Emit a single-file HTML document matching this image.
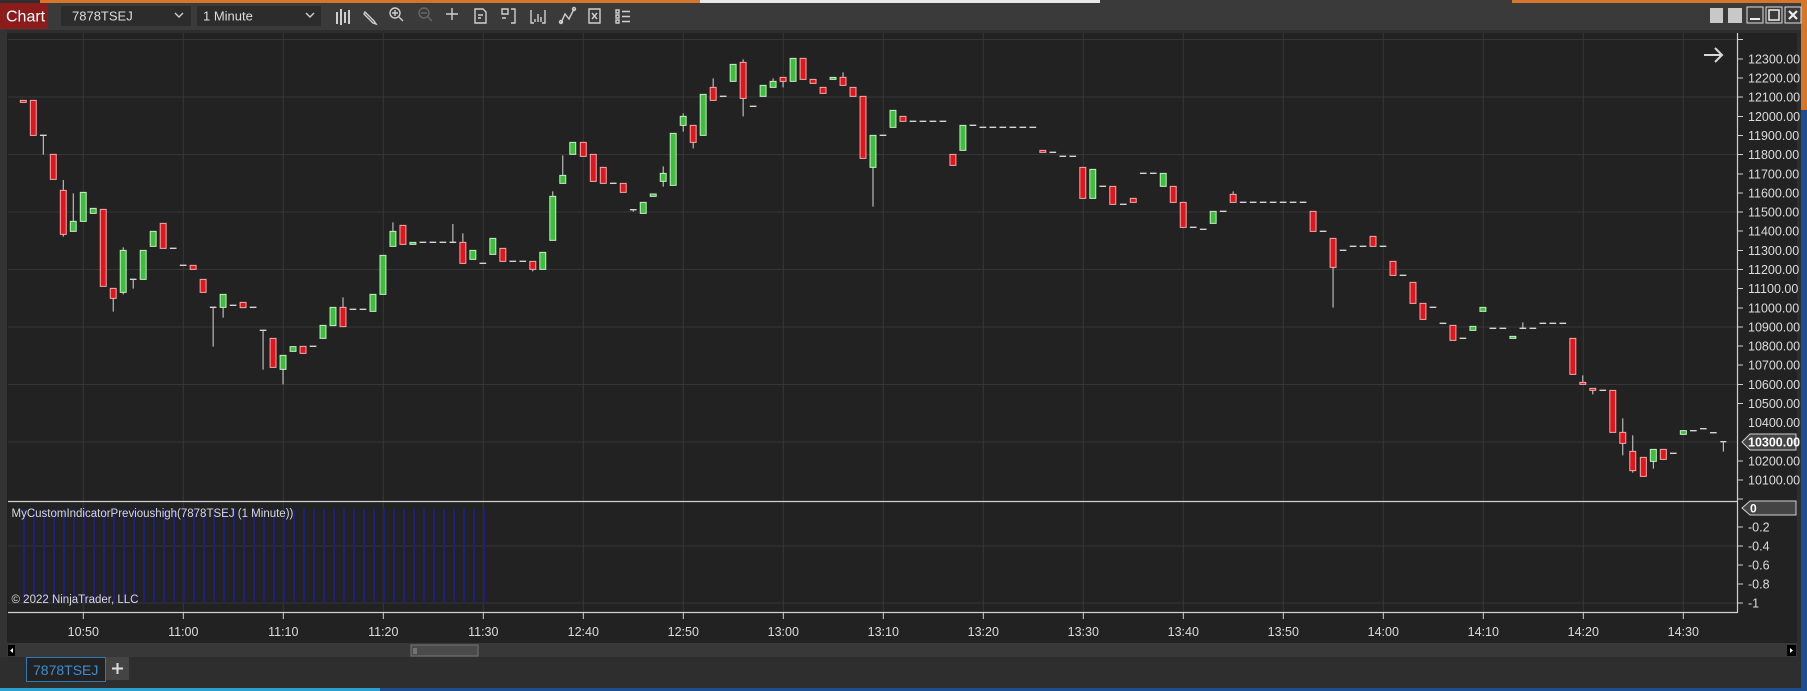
<!DOCTYPE html>
<html><head><meta charset="utf-8"><style>
html,body{margin:0;padding:0;background:#2b2b2b;width:1807px;height:691px;overflow:hidden}
svg{display:block}
text{font-family:"Liberation Sans",sans-serif}
.r{fill:#e3151c;stroke:#f2aaaa;stroke-width:1;vector-effect:non-scaling-stroke}
.g{fill:#3dbf3d;stroke:#c4efc4;stroke-width:1;vector-effect:non-scaling-stroke}
.w{stroke:#d6d6d6;stroke-width:1;vector-effect:non-scaling-stroke}
.d{stroke:#d6d6d6;stroke-width:1.3;vector-effect:non-scaling-stroke}
.ic{fill:none;stroke:#cfcfcf;stroke-width:1.4}
.ax{fill:#dcdcdc;font-size:12.5px}
</style></head><body>
<svg width="1807" height="691" viewBox="0 0 1807 691" xmlns="http://www.w3.org/2000/svg">
<defs>
<pattern id="bl" x="23" y="0" width="10" height="10" patternUnits="userSpaceOnUse"><rect x="0" y="0" width="2" height="10" fill="#1e1e80"/></pattern>
</defs>
<!-- frame -->
<rect x="0" y="0" width="1807" height="691" fill="#2d2d2d"/>
<rect x="40" y="0" width="660" height="3" fill="#d4772a"/>
<rect x="700" y="0" width="400" height="3" fill="#e8e8e8"/>
<rect x="1100" y="0" width="412" height="3" fill="#3a3a3a"/>
<rect x="1512" y="0" width="295" height="3" fill="#d4772a"/>
<rect x="1801" y="0" width="6" height="110" fill="#d4772a"/>
<rect x="1801" y="110" width="6" height="581" fill="#1d4f90"/>
<!-- toolbar -->
<rect x="0" y="3" width="1801" height="27" fill="#3a3a3a"/>
<rect x="0" y="3" width="48" height="26" fill="#8c1c1c"/>
<text x="6" y="21.5" fill="#fff" font-size="16">Chart</text>
<rect x="61" y="6" width="130" height="20" fill="#2c2c2c"/>
<text x="72" y="20.5" fill="#dcdcdc" font-size="13">7878TSEJ</text>
<path d="M175 13 l4 4 l4 -4" class="ic" stroke-width="1.8"/>
<rect x="197" y="6" width="124" height="20" fill="#2c2c2c"/>
<text x="203" y="20.5" fill="#dcdcdc" font-size="13">1 Minute</text>
<path d="M306 13 l4 4 l4 -4" class="ic" stroke-width="1.8"/>
<!-- icons -->
<g class="ic">
<path d="M337 12v12M341 9v16M345 12v11M349 10v14" stroke-width="2"/>
<path d="M365 12l9 9 2 3-3-1-9-9z"/>
<circle cx="395" cy="13" r="5"/><path d="M399 17l4 4M392 13h6M395 10v6"/>
<circle cx="424" cy="13" r="5" stroke="#666"/><path d="M428 17l4 4M421 13h6" stroke="#666"/>
<path d="M446 14h12M452 8v12"/>
<path d="M475 9h8l3 3v11h-11z M478 15h5M478 18h3"/>
<path d="M502 9h6v5h-6zM511 9h4v14h-4M502 18h4"/>
<path d="M531 10v13h3M545 10v13h-3M535 19v3M538 14v8M541 17v5"/>
<path d="M561 23l4-9 4 5 5-10"/><circle cx="561" cy="22" r="1.5"/><circle cx="574" cy="9" r="1.5"/>
<path d="M589 9h11v14h-11zM592 13l5 6M597 13l-5 6"/>
<path d="M616 10h3v3h-3zM616 15h3v3h-3zM616 20h3v3h-3zM622 11.5h8M622 16.5h8M622 21.5h8"/>
</g>
<!-- window buttons -->
<rect x="1710" y="8" width="13" height="15" fill="#c8c8c8"/>
<rect x="1728" y="8" width="14" height="15" fill="#c8c8c8"/>
<rect x="1747" y="7" width="16" height="16" fill="none" stroke="#ddd"/><path d="M1750 19h10" stroke="#eee" stroke-width="2"/>
<rect x="1766" y="7" width="16" height="16" fill="none" stroke="#ddd"/><rect x="1769" y="10" width="10" height="10" fill="none" stroke="#eee" stroke-width="1.5"/>
<rect x="1785" y="7" width="16" height="16" fill="none" stroke="#ddd"/><path d="M1789 11l8 8M1797 11l-8 8" stroke="#eee" stroke-width="2.2"/>
<!-- chart panel -->
<rect x="7" y="33" width="1790" height="624" fill="#222222"/>
<rect x="0" y="30" width="7" height="660" fill="#333"/>
<!-- grid -->
<g stroke="#363636" stroke-width="1">
<path d="M8 39.5H1737M8 97H1737M8 154.5H1737M8 212H1737M8 269.5H1737M8 327H1737M8 384.5H1737M8 442H1737M8 546H1737M8 603H1737"/>
<path d="M83.3 33V613M183.3 33V613M283.3 33V613M383.3 33V613M483.3 33V613M583.3 33V613M683.3 33V613M783.3 33V613M883.3 33V613M983.3 33V613M1083.3 33V613M1183.3 33V613M1283.3 33V613M1383.3 33V613M1483.3 33V613M1583.3 33V613M1683.3 33V613"/>
</g>
<!-- panel lines -->
<path d="M8 501.5H1737M8 612.5H1737M1737.5 33V613" stroke="#d0d0d0" stroke-width="1.2"/>
<!-- price axis -->
<g stroke="#cfcfcf"><path d="M1737 39.5h6M1737 59h6M1737 78h6M1737 97h6M1737 116.5h6M1737 135.5h6M1737 154.5h6M1737 174h6M1737 193h6M1737 212h6M1737 231h6M1737 250.5h6M1737 269.5h6M1737 288.5h6M1737 308h6M1737 327h6M1737 346h6M1737 365h6M1737 384.5h6M1737 403.5h6M1737 461h6M1737 480h6M1737 499h6M1737 527h6M1737 546h6M1737 565h6M1737 584h6M1737 603h6"/></g>
<g class="ax">
<text x="1748" y="63.5">12300.00</text><text x="1748" y="82.5">12200.00</text><text x="1748" y="101.5">12100.00</text><text x="1748" y="121">12000.00</text><text x="1748" y="140">11900.00</text><text x="1748" y="159">11800.00</text><text x="1748" y="178.5">11700.00</text><text x="1748" y="197.5">11600.00</text><text x="1748" y="216.5">11500.00</text><text x="1748" y="235.5">11400.00</text><text x="1748" y="255">11300.00</text><text x="1748" y="274">11200.00</text><text x="1748" y="293">11100.00</text><text x="1748" y="312.5">11000.00</text><text x="1748" y="331.5">10900.00</text><text x="1748" y="350.5">10800.00</text><text x="1748" y="369.5">10700.00</text><text x="1748" y="389">10600.00</text><text x="1748" y="408">10500.00</text><text x="1748" y="427">10400.00</text><text x="1748" y="465.5">10200.00</text><text x="1748" y="484.5">10100.00</text>
<text x="1748" y="531.5">-0.2</text><text x="1748" y="550.5">-0.4</text><text x="1748" y="569.5">-0.6</text><text x="1748" y="588.5">-0.8</text><text x="1748" y="607.5">-1</text>
</g>
<path d="M1742 442l8-8h46v16h-46z" fill="#444" stroke="#cfcfcf"/>
<text x="1748" y="446.5" fill="#fff" font-size="12.5" font-weight="bold">10300.00</text>
<path d="M1742 508l8-7h46v14h-46z" fill="#444" stroke="#cfcfcf"/>
<text x="1750" y="512.5" fill="#fff" font-size="12" font-weight="bold">0</text>
<path d="M1704 55h18M1715 48l7 7-7 7" fill="none" stroke="#d8d8d8" stroke-width="2"/>
<!-- indicator -->
<rect x="23" y="509" width="463" height="94" fill="url(#bl)"/>
<text x="11.5" y="517" fill="#d8d8d8" font-size="11.5">MyCustomIndicatorPrevioushigh(7878TSEJ (1 Minute))</text>
<text x="11.5" y="603" fill="#d8d8d8" font-size="11.5">© 2022 NinjaTrader, LLC</text>
<!-- time axis -->
<g stroke="#cfcfcf"><path d="M83.3 613v6M183.3 613v6M283.3 613v6M383.3 613v6M483.3 613v6M583.3 613v6M683.3 613v6M783.3 613v6M883.3 613v6M983.3 613v6M1083.3 613v6M1183.3 613v6M1283.3 613v6M1383.3 613v6M1483.3 613v6M1583.3 613v6M1683.3 613v6"/></g>
<g class="ax" text-anchor="middle">
<text x="83.3" y="636">10:50</text><text x="183.3" y="636">11:00</text><text x="283.3" y="636">11:10</text><text x="383.3" y="636">11:20</text><text x="483.3" y="636">11:30</text><text x="583.3" y="636">12:40</text><text x="683.3" y="636">12:50</text><text x="783.3" y="636">13:00</text><text x="883.3" y="636">13:10</text><text x="983.3" y="636">13:20</text><text x="1083.3" y="636">13:30</text><text x="1183.3" y="636">13:40</text><text x="1283.3" y="636">13:50</text><text x="1383.3" y="636">14:00</text><text x="1483.3" y="636">14:10</text><text x="1583.3" y="636">14:20</text><text x="1683.3" y="636">14:30</text>
</g>
<!-- scrollbar -->
<rect x="7" y="643" width="1790" height="14" fill="#383838"/>
<rect x="8" y="645" width="7" height="11" fill="#000"/><path d="M13 648v5l-3-2.5z" fill="#fff"/>
<rect x="1787" y="645" width="9" height="11" fill="#000"/><path d="M1790 648v5l3-2.5z" fill="#fff"/>
<rect x="411" y="645" width="67" height="11" fill="#4a4a4a" stroke="#777"/>
<path d="M414 648v6M416 648v6" stroke="#999"/>
<!-- tab bar -->
<rect x="0" y="657" width="1801" height="31" fill="#2e2e2e"/>
<rect x="26.5" y="657.5" width="79" height="24" fill="#222" stroke="#2f78b0"/>
<text x="33" y="675" fill="#3c8ed0" font-size="14">7878TSEJ</text>
<rect x="106" y="657" width="23" height="23" fill="#444"/>
<path d="M112 668.5h11M117.5 663v11" stroke="#ddd" stroke-width="2"/>
<rect x="0" y="688" width="380" height="3" fill="#2aa0d0"/>
<rect x="380" y="688" width="1427" height="3" fill="#1d4f90"/>

<!-- candles group 1 -->
<g transform="translate(0,80) scale(0.37,0.33333)">
<path class="w" d="M117 166V224M171 300V470M198 340V454M306 655V695M333 502V643M360 598V626M576 682V800M603 682V713M711 751V869M765 868V913M927 652V682M1062 427V454M1224 432V487M1251 460V487M1440 568V574M1494 334V349M1521 226V286"/>
<path class="d" d="M108 166h18M351 598h18M459 505h18M486 556h18M567 682h18M621 676h18M675 682h18M702 751h18M837 799h18M945 688h18M972 688h18M1134 487h18M1161 487h18M1188 487h18M1215 487h18M1296 550h18M1377 544h18M1404 544h18"/>
<rect class="r" x="55" y="61" width="16" height="6"/>
<rect class="r" x="82" y="61" width="16" height="105"/>
<rect class="r" x="136" y="223" width="16" height="75"/>
<rect class="r" x="163" y="331" width="16" height="132"/>
<rect class="g" x="190" y="424" width="16" height="30"/>
<rect class="g" x="217" y="337" width="16" height="87"/>
<rect class="g" x="244" y="385" width="16" height="15"/>
<rect class="r" x="271" y="388" width="16" height="231"/>
<rect class="r" x="298" y="625" width="16" height="30"/>
<rect class="g" x="325" y="511" width="16" height="126"/>
<rect class="g" x="379" y="511" width="16" height="87"/>
<rect class="g" x="406" y="454" width="16" height="45"/>
<rect class="r" x="433" y="430" width="16" height="75"/>
<rect class="r" x="514" y="556" width="16" height="12"/>
<rect class="r" x="541" y="598" width="16" height="39"/>
<rect class="g" x="595" y="643" width="16" height="39"/>
<rect class="r" x="649" y="667" width="16" height="16"/>
<rect class="r" x="730" y="775" width="16" height="87"/>
<rect class="g" x="757" y="826" width="16" height="42"/>
<rect class="g" x="784" y="800" width="16" height="14"/>
<rect class="r" x="811" y="799" width="16" height="21"/>
<rect class="g" x="865" y="736" width="16" height="39"/>
<rect class="g" x="892" y="682" width="16" height="55"/>
<rect class="r" x="919" y="682" width="16" height="58"/>
<rect class="g" x="1000" y="643" width="16" height="51"/>
<rect class="g" x="1027" y="526" width="16" height="117"/>
<rect class="g" x="1054" y="454" width="16" height="45"/>
<rect class="r" x="1081" y="436" width="16" height="57"/>
<rect class="g" x="1108" y="487" width="16" height="6"/>
<rect class="r" x="1243" y="487" width="16" height="63"/>
<rect class="g" x="1270" y="511" width="16" height="27"/>
<rect class="g" x="1324" y="475" width="16" height="48"/>
<rect class="r" x="1351" y="505" width="16" height="39"/>
<rect class="r" x="1432" y="544" width="16" height="24"/>
<rect class="g" x="1459" y="517" width="16" height="51"/>
<rect class="g" x="1486" y="349" width="16" height="132"/>
<rect class="g" x="1513" y="286" width="16" height="24"/>
<rect class="g" x="1540" y="187" width="16" height="36"/>
</g>
<!-- group 2 -->
<g transform="translate(540,40) scale(0.37,0.33333)">
<path class="w" d="M333 379V440M387 220V275M414 307V325M468 115V142M549 58V229M630 115V124M657 124V142M819 97V112M900 382V500M252 509V515"/>
<path class="d" d="M189 430h18M243 509h18M486 169h18M567 199h18M918 286h18M999 244h18M1026 244h18M1053 244h18M1080 244h18M1161 256h18M1188 262h18M1215 262h18M1242 262h18M1269 262h18M1296 262h18M1323 262h18M1377 337h18M1404 349h18M1431 349h18M1512 439h18"/>
<rect class="r" x="109" y="307" width="16" height="42"/>
<rect class="r" x="136" y="343" width="16" height="81"/>
<rect class="r" x="163" y="382" width="16" height="48"/>
<rect class="r" x="217" y="430" width="16" height="27"/>
<rect class="g" x="271" y="487" width="16" height="33"/>
<rect class="g" x="298" y="462" width="16" height="7"/>
<rect class="g" x="325" y="400" width="16" height="24"/>
<rect class="g" x="352" y="280" width="16" height="156"/>
<rect class="g" x="379" y="229" width="16" height="27"/>
<rect class="r" x="406" y="256" width="16" height="51"/>
<rect class="g" x="433" y="163" width="16" height="123"/>
<rect class="r" x="460" y="142" width="16" height="39"/>
<rect class="g" x="514" y="73" width="16" height="51"/>
<rect class="r" x="541" y="67" width="16" height="108"/>
<rect class="g" x="595" y="136" width="16" height="33"/>
<rect class="g" x="622" y="124" width="16" height="18"/>
<rect class="r" x="649" y="112" width="16" height="12"/>
<rect class="g" x="676" y="55" width="16" height="69"/>
<rect class="r" x="703" y="55" width="16" height="63"/>
<rect class="r" x="730" y="118" width="16" height="12"/>
<rect class="r" x="757" y="142" width="16" height="18"/>
<rect class="g" x="784" y="112" width="16" height="6"/>
<rect class="r" x="811" y="112" width="16" height="24"/>
<rect class="r" x="838" y="142" width="16" height="27"/>
<rect class="r" x="865" y="169" width="16" height="186"/>
<rect class="g" x="892" y="286" width="16" height="96"/>
<rect class="g" x="946" y="211" width="16" height="51"/>
<rect class="r" x="973" y="229" width="16" height="15"/>
<rect class="r" x="1108" y="343" width="16" height="33"/>
<rect class="g" x="1135" y="256" width="16" height="75"/>
<rect class="r" x="1351" y="331" width="16" height="6"/>
<rect class="r" x="1459" y="382" width="16" height="93"/>
<rect class="g" x="1486" y="388" width="16" height="87"/>
<rect class="r" x="1540" y="439" width="16" height="54"/>
</g>
<!-- group 3 -->
<g transform="translate(1060,130) scale(0.37,0.33333)">
<path class="w" d="M468 184V193M738 412V533M1251 577V595M1413 736V757M1440 775V793M1521 865V976M1548 916V1028"/>
<path class="d" d="M162 223h18M216 130h18M243 130h18M351 292h18M378 298h18M432 244h18M486 217h18M513 217h18M540 217h18M567 217h18M594 217h18M621 217h18M648 217h18M702 304h18M756 361h18M783 349h18M810 349h18M864 349h18M918 436h18M999 532h18M1026 580h18M1080 625h18M1161 595h18M1188 595h18M1242 595h18M1269 595h18M1296 580h18M1323 580h18M1350 580h18M1458 781h18"/>
<rect class="r" x="190" y="205" width="16" height="12"/>
<rect class="g" x="271" y="130" width="16" height="39"/>
<rect class="r" x="298" y="169" width="16" height="48"/>
<rect class="r" x="325" y="217" width="16" height="75"/>
<rect class="g" x="406" y="244" width="16" height="36"/>
<rect class="r" x="460" y="193" width="16" height="24"/>
<rect class="r" x="676" y="244" width="16" height="60"/>
<rect class="r" x="730" y="325" width="16" height="87"/>
<rect class="r" x="838" y="319" width="16" height="30"/>
<rect class="r" x="892" y="394" width="16" height="42"/>
<rect class="r" x="946" y="457" width="16" height="63"/>
<rect class="r" x="973" y="520" width="16" height="48"/>
<rect class="r" x="1054" y="586" width="16" height="45"/>
<rect class="g" x="1108" y="589" width="16" height="12"/>
<rect class="g" x="1135" y="532" width="16" height="12"/>
<rect class="g" x="1216" y="619" width="16" height="6"/>
<rect class="r" x="1378" y="625" width="16" height="108"/>
<rect class="r" x="1405" y="757" width="16" height="6"/>
<rect class="r" x="1432" y="775" width="16" height="6"/>
<rect class="r" x="1486" y="781" width="16" height="126"/>
<rect class="r" x="1513" y="907" width="16" height="33"/>
<rect class="r" x="1540" y="964" width="16" height="58"/>
</g>
<!-- group 4 -->
<g transform="translate(1500,400) scale(0.33333)">
<path class="w" d="M460 184V206M670 125V155"/>
<path class="d" d="M510 160h20M570 92h20M600 86h20M630 98h20M661 125h18"/>
<rect class="r" x="421" y="172" width="18" height="57"/>
<rect class="g" x="451" y="148" width="18" height="36"/>
<rect class="r" x="481" y="148" width="18" height="30"/>
<rect class="g" x="541" y="92" width="18" height="11"/>
</g>
</svg>
</body></html>
